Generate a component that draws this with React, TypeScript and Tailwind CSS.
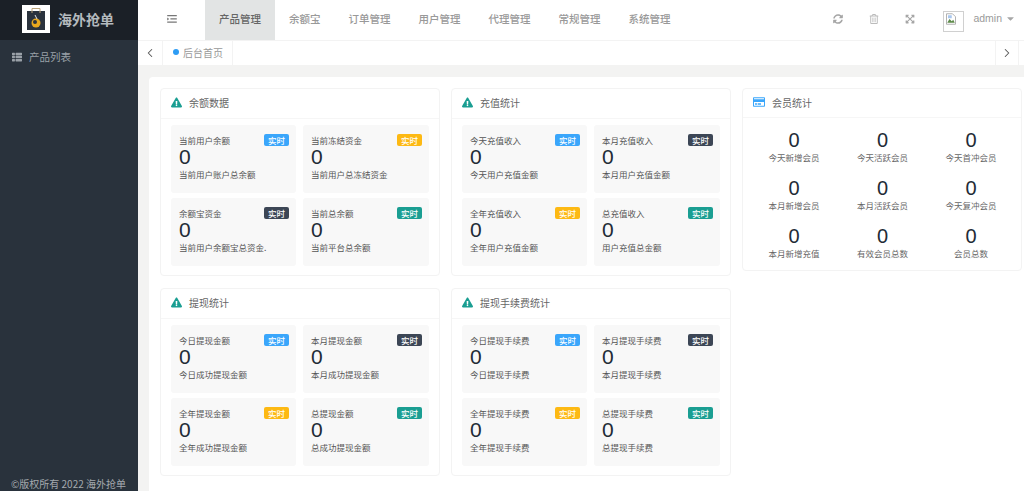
import { ChevronLeft, ChevronRight } from "lucide-react";
import {
  FaCaretDown,
  FaExclamationTriangle,
  FaExpandArrowsAlt,
  FaRegCreditCard,
  FaRegTrashAlt,
  FaSyncAlt,
  FaThList,
} from "react-icons/fa";

const FONT = "font-['Noto_Sans_CJK_SC','Liberation_Sans',sans-serif]";

const NAV_ITEMS = ["余额宝", "订单管理", "用户管理", "代理管理", "常规管理", "系统管理"];

const BADGE = {
  blue: "bg-[#3aa6fb]",
  dark: "bg-[#3c4655]",
  yellow: "bg-[#fdb913]",
  teal: "bg-[#1a9e92]",
};

type Stat = { title: string; note: string; badge: keyof typeof BADGE };

const PANELS: { title: string; stats: Stat[] }[] = [
  {
    title: "余额数据",
    stats: [
      { title: "当前用户余额", note: "当前用户账户总余额", badge: "blue" },
      { title: "当前冻结资金", note: "当前用户总冻结资金", badge: "yellow" },
      { title: "余额宝资金", note: "当前用户余额宝总资金.", badge: "dark" },
      { title: "当前总余额", note: "当前平台总余额", badge: "teal" },
    ],
  },
  {
    title: "充值统计",
    stats: [
      { title: "今天充值收入", note: "今天用户充值金额", badge: "blue" },
      { title: "本月充值收入", note: "本月用户充值金额", badge: "dark" },
      { title: "全年充值收入", note: "全年用户充值金额", badge: "yellow" },
      { title: "总充值收入", note: "用户充值总金额", badge: "teal" },
    ],
  },
  {
    title: "提现统计",
    stats: [
      { title: "今日提现金额", note: "今日成功提现金额", badge: "blue" },
      { title: "本月提现金额", note: "本月成功提现金额", badge: "dark" },
      { title: "全年提现金额", note: "全年成功提现金额", badge: "yellow" },
      { title: "总提现金额", note: "总成功提现金额", badge: "teal" },
    ],
  },
  {
    title: "提现手续费统计",
    stats: [
      { title: "今日提现手续费", note: "今日提现手续费", badge: "blue" },
      { title: "本月提现手续费", note: "本月提现手续费", badge: "dark" },
      { title: "全年提现手续费", note: "全年提现手续费", badge: "yellow" },
      { title: "总提现手续费", note: "总提现手续费", badge: "teal" },
    ],
  },
];

const MEMBERS = [
  "今天新增会员",
  "今天活跃会员",
  "今天首冲会员",
  "本月新增会员",
  "本月活跃会员",
  "今天复冲会员",
  "本月新增充值",
  "有效会员总数",
  "会员总数",
];

function StatCard({ stat }: { stat: Stat }) {
  return (
    <div className="h-[68px] rounded-[3px] bg-[#f8f8f8] pl-[8px] pr-[7px] pt-[9px]">
      <div className="flex h-[12px] items-center justify-between">
        <span className="text-[8.5px] leading-[12px] text-[#555]">{stat.title}</span>
        <span
          className={`flex h-[12px] w-[25px] items-center justify-center rounded-[2px] text-[8.5px] font-medium leading-none text-white ${BADGE[stat.badge]}`}
        >
          实时
        </span>
      </div>
      <p className="font-['Liberation_Sans',sans-serif] text-[21px] leading-[22px] text-[#222b36]">0</p>
      <p className="text-[8.5px] leading-[12px] text-[#555]">{stat.note}</p>
    </div>
  );
}

function Panel({ title, stats }: { title: string; stats: Stat[] }) {
  return (
    <section className="h-[188px] w-[280px] rounded-[4px] border border-[#f3f3f3] bg-white">
      <div className="flex h-[30px] items-center gap-[7px] border-b border-[#f6f6f6] pb-[3px] pl-[10px]">
        <FaExclamationTriangle className="size-[11px] text-[#1a9e92]" />
        <h2 className="text-[10px] text-[#666]">{title}</h2>
      </div>
      <div className="grid grid-cols-[125px_126px] gap-x-[7px] gap-y-[5px] pl-[10px] pt-[6px]">
        {stats.map((stat) => (
          <StatCard key={stat.title} stat={stat} />
        ))}
      </div>
    </section>
  );
}

function BrokenImage() {
  return (
    <div className="flex h-[21px] w-[21px] items-start justify-start border border-[#d0d0d0] bg-white p-[1px]">
      <svg viewBox="0 0 16 16" className="size-[12px]">
        <path d="M2 1h8l4 4v10H2z" fill="#fff" stroke="#9a9a9a" strokeWidth="1" />
        <path d="M3 13l3-5 3 3 2-2 2 4z" fill="#5d8a4a" />
        <path d="M4 3h5v4H4z" fill="#a9c7ef" />
      </svg>
    </div>
  );
}

export default function App() {
  return (
    <div className={`flex h-[491px] w-[1024px] overflow-hidden bg-white ${FONT}`}>
      <aside className="flex w-[138px] shrink-0 flex-col bg-[#29323c]">
        <div className="flex h-[40px] items-center bg-[#1b2027] pb-[2px] pl-[22px]">
          <div className="flex size-[28px] items-center justify-center bg-white">
            <svg viewBox="0 0 28 28" className="size-[28px]">
              <path d="M5 6h18v19H5z" fill="#2b333e" />
              <path d="M10 8V3.5h8V8" fill="none" stroke="#b9a27a" strokeWidth="1" />
              <circle cx="14" cy="18" r="4.5" fill="#e9a81f" />
              <circle cx="13" cy="17" r="2" fill="#2b333e" />
              <path d="M13 10l2 4" stroke="#e5e5e5" strokeWidth="1" />
            </svg>
          </div>
          <span className="ml-[8px] text-[14px] font-bold text-[#b4b9bd]">海外抢单</span>
        </div>
        <div className="flex h-[34px] items-center pl-[12px] text-[#9aa1a8]">
          <FaThList className="size-[10px]" />
          <span className="ml-[7px] text-[10.5px]">产品列表</span>
        </div>
        <p className="mt-auto pl-[11px] text-[10px] leading-[14px] text-[#a4a9ae]">©版权所有 2022 海外抢单</p>
      </aside>

      <div className="flex min-w-0 flex-1 flex-col">
        <header className="flex h-[41px] shrink-0 items-stretch border-b border-[#f3f3f3]">
          <div className="flex w-[67px] items-center justify-center pb-[3px] text-[#777]">
            <svg viewBox="0 0 12 10" className="h-[8px] w-[10px]" fill="currentColor">
              <path d="M0 0h12v1.6H0zM4 4h8v1.6H4zM0 8h12v1.6H0zM0 3l2.6 2L0 7z" />
            </svg>
          </div>
          <div className="flex w-[70px] items-center justify-center bg-[#e2e4e4] pb-[3px] text-[10.5px] font-medium text-[#666]">
            产品管理
          </div>
          {NAV_ITEMS.map((item) => (
            <div key={item} className="flex items-center px-[14px] pb-[3px] text-[10.5px] font-medium text-[#999]">
              {item}
            </div>
          ))}
          <div className="ml-auto flex items-center pb-[3px] text-[#a6a6a6]">
            <FaSyncAlt className="size-[10px]" />
            <FaRegTrashAlt className="ml-[26px] size-[10px] text-[#bbb]" />
            <FaExpandArrowsAlt className="ml-[26px] size-[10px]" />
            <div className="ml-[28px] mt-[5px]">
              <BrokenImage />
            </div>
            <span className="ml-[9px] font-['Liberation_Sans',sans-serif] text-[10.5px] text-[#9a9a9a]">admin</span>
            <FaCaretDown className="ml-[3px] mr-[8px] size-[11px]" />
          </div>
        </header>

        <div className="flex h-[24px] shrink-0 items-stretch">
          <div className="flex w-[25px] items-center justify-center border-r border-[#f3f3f3] text-[#555]">
            <ChevronLeft className="size-[14px]" strokeWidth={1.8} />
          </div>
          <div className="flex w-[70px] items-center border-r border-[#f3f3f3] pb-[2px] pl-[10px]">
            <span className="size-[6px] rounded-full bg-[#2d9cf4]" />
            <span className="ml-[4px] text-[10px] text-[#999]">后台首页</span>
          </div>
          <div className="ml-auto mr-[5px] flex w-[24px] items-center justify-center border-x border-[#f3f3f3] text-[#555]">
            <ChevronRight className="size-[14px]" strokeWidth={1.8} />
          </div>
        </div>

        <main className="min-h-0 flex-1 bg-[#f3f3f2] pl-[11px] pt-[12px]">
          <div className="flex h-full gap-[11px] rounded-tl-[4px] bg-white pl-[11px] pr-[2px] pt-[11px]">
            <div className="grid grid-cols-[280px_280px] content-start gap-x-[11px] gap-y-[12px]">
              {PANELS.map((panel) => (
                <Panel key={panel.title} title={panel.title} stats={panel.stats} />
              ))}
            </div>
            <section className="h-[183px] w-[280px] rounded-[4px] border border-[#f3f3f3] bg-white">
              <div className="flex h-[29px] items-center gap-[7px] border-b border-[#f6f6f6] pb-[2px] pl-[10px]">
                <FaRegCreditCard className="size-[12px] text-[#3aa6fb]" />
                <h2 className="text-[10px] text-[#666]">会员统计</h2>
              </div>
              <div className="grid grid-cols-[88px_89px_88px] gap-y-[15px] pl-[7px] pt-[12px]">
                {MEMBERS.map((label) => (
                  <div key={label} className="flex flex-col items-center">
                    <span className="font-['Liberation_Sans',sans-serif] text-[20px] leading-[21px] text-[#222b36]">0</span>
                    <span className="text-[8.5px] leading-[12px] text-[#666]">{label}</span>
                  </div>
                ))}
              </div>
            </section>
          </div>
        </main>
      </div>
    </div>
  );
}
